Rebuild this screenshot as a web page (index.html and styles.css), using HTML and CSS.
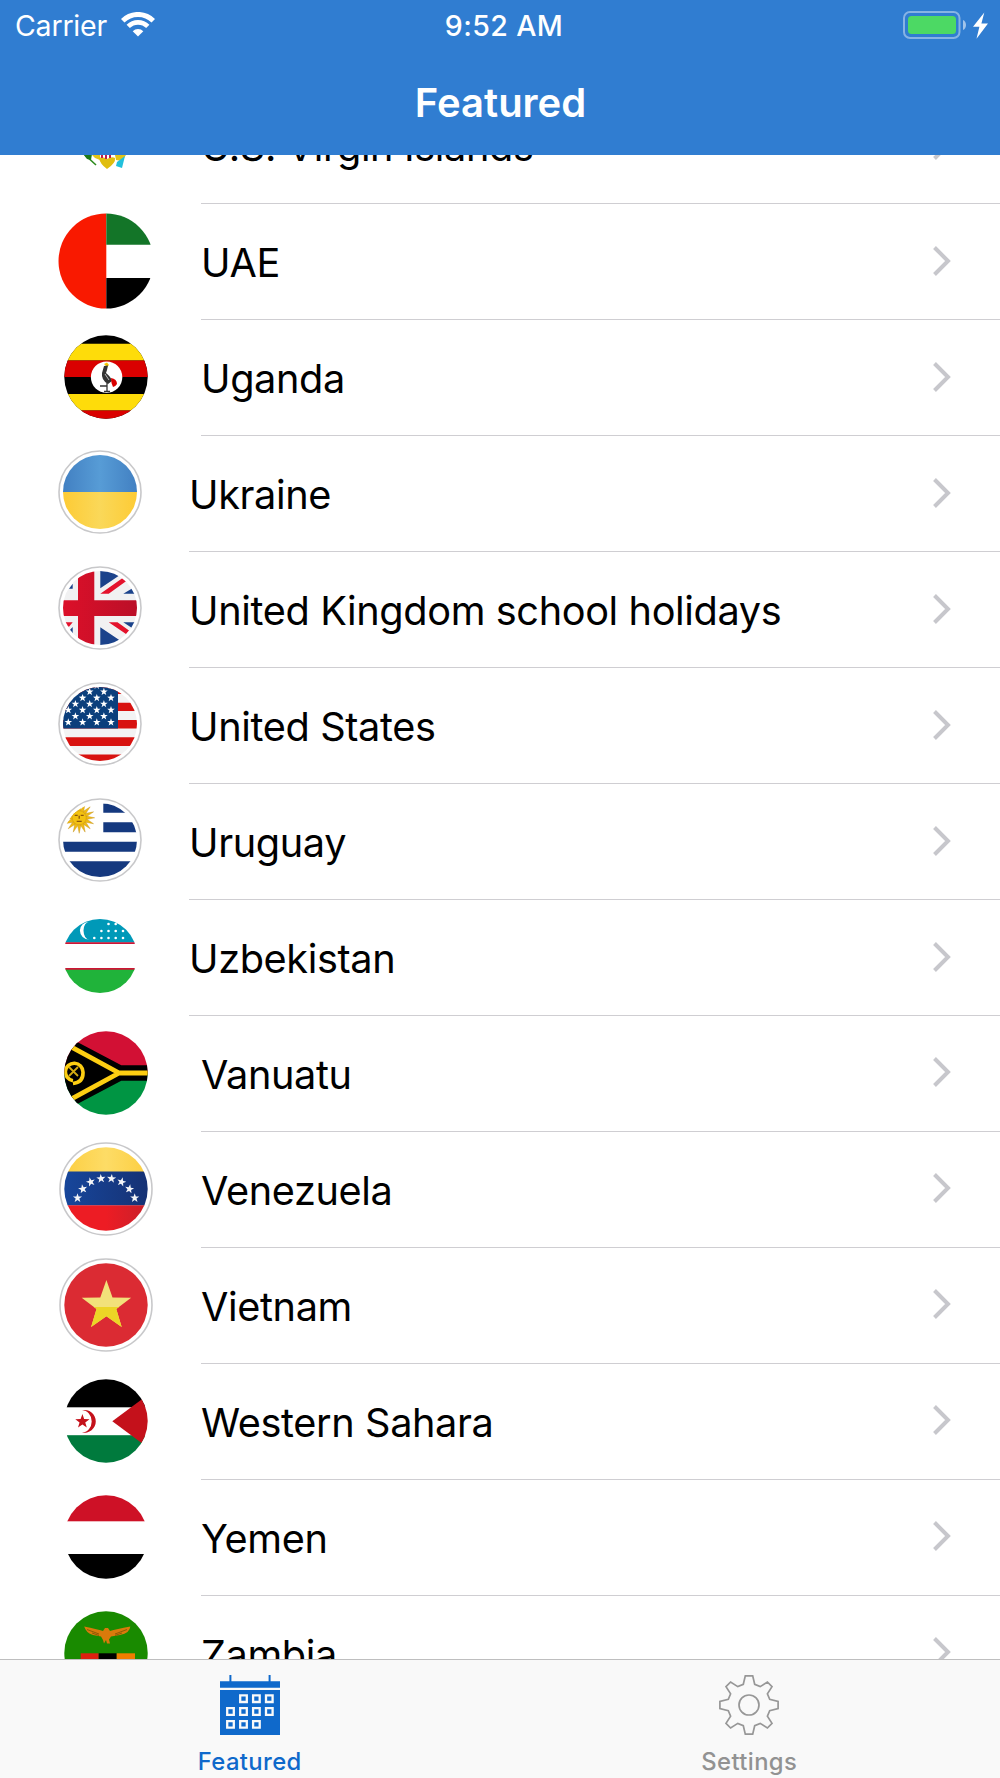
FILE: index.html
```html
<!DOCTYPE html>
<html lang="en">
<head>
    <meta charset="UTF-8">
    <meta name="viewport" content="width=device-width, initial-scale=1.0">
    <title>Featured</title>
    <link rel="stylesheet" href="styles.css">
</head>
<body>
    <!-- Shared shapes -->
    <svg class="defs" width="0" height="0" aria-hidden="true">
        <defs>
            <clipPath id="clip-xl"><circle r="47.5"/></clipPath>
            <clipPath id="clip-lg"><circle r="41.7"/></clipPath>
            <clipPath id="clip-sm"><circle r="37"/></clipPath>
            <linearGradient id="ua-blue"><stop offset="0" stop-color="#4280c2"/><stop offset=".5" stop-color="#579cd6"/><stop offset="1" stop-color="#4280c2"/></linearGradient>
            <linearGradient id="ua-yellow"><stop offset="0" stop-color="#fdcb35"/><stop offset=".5" stop-color="#fad859"/><stop offset="1" stop-color="#fdcb35"/></linearGradient>
            <linearGradient id="ve-yellow"><stop offset="0" stop-color="#fcce41"/><stop offset=".5" stop-color="#fddc66"/><stop offset="1" stop-color="#fcce41"/></linearGradient>
            <linearGradient id="ve-blue"><stop offset="0" stop-color="#17469b"/><stop offset="1" stop-color="#163274"/></linearGradient>
            <linearGradient id="ve-red"><stop offset=".5" stop-color="#ed1c24"/><stop offset="1" stop-color="#c9202a"/></linearGradient>
            <linearGradient id="gb-red"><stop offset="0" stop-color="#dc1029"/><stop offset="1" stop-color="#bb0f28"/></linearGradient>
            <path id="star" d="M0-10 2.35-3.24 9.51-3.09 3.8 1.24 5.88 8.09 0 4-5.88 8.09-3.8 1.24-9.51-3.09-2.35-3.24Z"/>
            <path id="chevron" d="M2.5 2.5 16 16 2.5 29.5"/>
        </defs>
    </svg>

    <header class="header">
        <div class="status-bar">
            <div class="carrier">
                <span>Carrier</span>
                <svg class="wifi" width="34" height="25" viewBox="0 0 34 25">
                    <path d="M1.7 8.8a21.6 21.6 0 0 1 30.6 0" fill="none" stroke="#fff" stroke-width="5"/>
                    <path d="M7.2 14.4a13.9 13.9 0 0 1 19.6 0" fill="none" stroke="#fff" stroke-width="4.6"/>
                    <path d="M17 24.6 11.7 19.2a7.5 7.5 0 0 1 10.6 0Z" fill="#fff"/>
                </svg>
            </div>
            <span class="time">9:52 AM</span>
            <svg class="battery" width="86" height="30" viewBox="0 0 86 30">
                <rect x="1" y="2" width="55.5" height="26" rx="6" fill="none" stroke="#fff" stroke-opacity=".42" stroke-width="2"/>
                <rect x="5" y="6" width="48" height="18" rx="3.5" fill="#4cd964"/>
                <path d="M60 10c4 1.6 4 8.4 0 10Z" fill="#fff" fill-opacity=".55"/>
                <path d="M81.3 2.5 70 16.8h6.4L73.5 28.8 85 13.6h-6.6Z" fill="#fff"/>
            </svg>
        </div>
        <h1 class="title">Featured</h1>
    </header>

    <main class="list-wrap">
        <ul class="list">
            <li class="row">
                <svg class="flag" viewBox="-50 -50 100 100">
                    <path d="M-21 10-10 20" stroke="#2c8a1c" stroke-width="1.6"/>
                    <path d="M-23 9h9l-1 6-4-1Z" fill="#1d7a1a"/>
                    <path d="M-14 10h8v5l-5-2Z" fill="#e3c415"/>
                    <path d="M9 10h11l-4 6-6-1Z" fill="#e3c415"/>
                    <path d="M-7 13Q-3 11 1 14q5-3 8-1 1 5-8 11-7-5-8-11Z" fill="#e0be10"/>
                    <path d="M-4 9v4M0 9v5M4 9v4" stroke="#c21f4a" stroke-width="2"/>
                    <path d="M11 17 19 11l-3 12-6-2Z" fill="#21c0dc"/>
                </svg>
                <div class="cell"><span class="name">U.S. Virgin Islands</span><svg class="chevron"><use href="#chevron"/></svg></div>
            </li>
            <li class="row">
                <svg class="flag" viewBox="-50 -50 100 100">
                    <g clip-path="url(#clip-xl)">
                        <path d="M-50-50H.3V50H-50Z" fill="#f91900"/>
                        <path d="M.3-50H50v33.8H.3Z" fill="#137528"/>
                        <path d="M.3 17H50v33H.3Z" fill="#000"/>
                    </g>
                </svg>
                <div class="cell"><span class="name">UAE</span><svg class="chevron"><use href="#chevron"/></svg></div>
            </li>
            <li class="row">
                <svg class="flag" viewBox="-50 -50 100 100">
                    <g clip-path="url(#clip-lg)">
                        <rect x="-50" y="-50" width="100" height="100" fill="#000"/>
                        <path d="M-50-33.3H50v16.7H-50ZM-50 17H50v16.500H-50Z" fill="#fedc0a"/>
                        <path d="M-50-16.6H50V0H-50ZM-50 33.5H50V50H-50Z" fill="#da0000"/>
                        <circle cx=".6" cy=".2" r="15.7" fill="#fff"/>
                        <path d="M-2-13 1-14.5 3-12 1-10Z" fill="#f2c500"/>
                        <path d="M-2-11 2-11.500 1-7 0-4Q5 0 6 4L2 7Q-5 3-4-4Z" fill="#333"/>
                        <path d="M-1-3 3 3" stroke="#bbb" stroke-width="1"/>
                        <path d="M5 1q6 1 6 6-2 3-4 3-2-4-2-9Z" fill="#d90000"/>
                        <path d="M1 6v8M-2 14.5h6M1 9h-7" fill="none" stroke="#333" stroke-width="1.3"/>
                    </g>
                </svg>
                <div class="cell"><span class="name">Uganda</span><svg class="chevron"><use href="#chevron"/></svg></div>
            </li>
            <li class="row small">
                <svg class="flag" viewBox="-50 -50 100 100">
                    <circle class="ring" r="41"/>
                    <g clip-path="url(#clip-sm)">
                        <rect x="-37" y="-37" width="74" height="37" fill="url(#ua-blue)"/>
                        <rect x="-37" y="0" width="74" height="37" fill="url(#ua-yellow)"/>
                    </g>
                </svg>
                <div class="cell"><span class="name">Ukraine</span><svg class="chevron"><use href="#chevron"/></svg></div>
            </li>
            <li class="row small">
                <svg class="flag" viewBox="-50 -50 100 100">
                    <circle class="ring" r="41"/>
                    <g clip-path="url(#clip-sm)">
                        <rect x="-37" y="-37" width="74" height="74" fill="#f1f1f2"/>
                        <path d="M.3-37 20-36V-33L.3-19.7ZM23.3-14.3 32-19.6 40-14.3ZM.3 19.3 20 32.5V37H.3ZM23.3 14.3H40L32 20ZM-31-19.3-27.3-24.3V-19.3ZM-31 23-27.3 19V26Z" fill="#1b438b"/>
                        <path d="M.3-14.3H8.7L26-26.7 23-30.2ZM8.7 14.3H17.5L29 22.5 26 26ZM-34.5 14.3H-27.3L-31 18.8-34.5 17.5Z" fill="#e4122c"/>
                        <path d="M-22-37h16.3v29.3H37V8H-5.7v29H-22V8h-15V-7.7h15Z" fill="url(#gb-red)"/>
                    </g>
                </svg>
                <div class="cell"><span class="name">United Kingdom school holidays</span><svg class="chevron"><use href="#chevron"/></svg></div>
            </li>
            <li class="row small">
                <svg class="flag" viewBox="-50 -50 100 100">
                    <circle class="ring" r="41"/>
                    <g clip-path="url(#clip-sm)">
                        <rect x="-37" y="-37" width="74" height="74" fill="#f3f3f3"/>
                        <path d="M-37-38.5h74v8.5h-74ZM-37-21.3h74v8.3h-74ZM-37-4h74v8.4h-74ZM-37 13.3h74V22h-74ZM-37 30.5h74V39h-74Z" fill="#d8120f"/>
                        <rect x="-37" y="-37" width="55" height="41.5" fill="#0b3f7c"/>
                        <g id="us-stars" fill="#fff">
                            <use href="#star" transform="translate(-31.7 -1.7) scale(.4)"/>
                            <use href="#star" transform="translate(-17.4 -1.7) scale(.4)"/>
                            <use href="#star" transform="translate(-3.2 -1.7) scale(.4)"/>
                            <use href="#star" transform="translate(11 -1.7) scale(.4)"/>
                            <use href="#star" transform="translate(-24.6 -7.8) scale(.4)"/>
                            <use href="#star" transform="translate(-10.3 -7.8) scale(.4)"/>
                            <use href="#star" transform="translate(3.9 -7.8) scale(.4)"/>
                        </g>
                        <use href="#us-stars" y="-12.2"/>
                        <use href="#us-stars" y="-24.4"/>
                        <use href="#us-stars" y="-36.6"/>
                    </g>
                </svg>
                <div class="cell"><span class="name">United States</span><svg class="chevron"><use href="#chevron"/></svg></div>
            </li>
            <li class="row small">
                <svg class="flag" viewBox="-50 -50 100 100">
                    <circle class="ring" r="41"/>
                    <g clip-path="url(#clip-sm)">
                        <path d="M3.3-36.5H37v9.2H3.3ZM3.3-17.7H37v10H3.3ZM-37 1.700h74v10h-74ZM-37 21.3h74V37h-74Z" fill="#15397f"/>
                        <g transform="translate(-20.8 -22.2)" fill="#f0bb10" stroke="#c4901f" stroke-width=".4">
                            <g id="rays">
                                <path d="M-2-6 0-15.5 2-6V6L0 15.5-2 6Z"/>
                                <path d="M-2-6 0-15.5 2-6V6L0 15.5-2 6Z" transform="rotate(45)"/>
                                <path d="M-2-6 0-15.5 2-6V6L0 15.5-2 6Z" transform="rotate(90)"/>
                                <path d="M-2-6 0-15.5 2-6V6L0 15.5-2 6Z" transform="rotate(135)"/>
                            </g>
                            <use href="#rays" transform="rotate(22.5)"/>
                            <circle r="7" fill="#f3c211"/>
                            <path d="M-4.5-2.5h3M1.5-2.5h3M0-2v3M-2.5 3.5h5" stroke="#8a5510" stroke-width="1.3"/>
                        </g>
                    </g>
                </svg>
                <div class="cell"><span class="name">Uruguay</span><svg class="chevron"><use href="#chevron"/></svg></div>
            </li>
            <li class="row small">
                <svg class="flag" viewBox="-50 -50 100 100">
                    <g clip-path="url(#clip-sm)">
                        <rect x="-37" y="-37" width="74" height="23.5" fill="#0099b8"/>
                        <rect x="-37" y="13" width="74" height="24" fill="#20b33a"/>
                        <path d="M-37-13.7h74v1.8h-74ZM-37 12h74v1.8h-74Z" fill="#ce1435"/>
                        <path d="M-10.7-34.3a9.4 8.9 0 0 0 0 17.8 5.8 8.9 0 0 1 0-17.8Z" fill="#fff"/>
                        <g fill="#fff">
                            <circle cx="-5.7" cy="-18" r="1.3"/><circle cx="1.4" cy="-18" r="1.3"/><circle cx="8.5" cy="-18" r="1.3"/><circle cx="15.7" cy="-18" r="1.3"/><circle cx="23" cy="-18" r="1.3"/>
                            <circle cx="1.4" cy="-25" r="1.3"/><circle cx="8.5" cy="-25" r="1.3"/><circle cx="15.7" cy="-25" r="1.3"/><circle cx="23" cy="-25" r="1.3"/>
                            <circle cx="8.5" cy="-32" r="1.3"/><circle cx="15.7" cy="-32" r="1.3"/>
                        </g>
                    </g>
                </svg>
                <div class="cell"><span class="name">Uzbekistan</span><svg class="chevron"><use href="#chevron"/></svg></div>
            </li>
            <li class="row">
                <svg class="flag" viewBox="-50 -50 100 100">
                    <g clip-path="url(#clip-lg)">
                        <rect x="-50" y="-50" width="100" height="50" fill="#d21034"/>
                        <rect x="-50" y="0" width="100" height="50" fill="#009543"/>
                        <path d="M-46-40 15.3-7.7H50V7.7H15.3L-46 40Z" fill="#000"/>
                        <path d="M-46-32.3 13 0-46 32.3M12 0H50" fill="none" stroke="#fdce12" stroke-width="4.8"/>
                        <path d="M-33 7.700A8.800 8.800 0 1 1-23-1Q-22.500 9.500-33 10.500" fill="none" stroke="#fdce12" stroke-width="3.6"/>
                        <path d="M-37-6-28 3M-28-6-37 3" stroke="#d3ab12" stroke-width="1.8"/>
                    </g>
                </svg>
                <div class="cell"><span class="name">Vanuatu</span><svg class="chevron"><use href="#chevron"/></svg></div>
            </li>
            <li class="row">
                <svg class="flag" viewBox="-50 -50 100 100">
                    <circle class="ring" r="46"/>
                    <g clip-path="url(#clip-lg)">
                        <rect x="-42" y="-42" width="84" height="25" fill="url(#ve-yellow)"/>
                        <rect x="-42" y="-17.5" width="84" height="34" fill="url(#ve-blue)"/>
                        <rect x="-42" y="16.3" width="84" height="26" fill="url(#ve-red)"/>
                        <g fill="#f4f5f7">
                            <use href="#star" transform="translate(-28.5 9) scale(.48)"/>
                            <use href="#star" transform="translate(-23.2 0) rotate(-10) scale(.48)"/>
                            <use href="#star" transform="translate(-15.3 -7) rotate(-15) scale(.48)"/>
                            <use href="#star" transform="translate(-5 -10.3) rotate(-5) scale(.48)"/>
                            <use href="#star" transform="translate(5.5 -10.3) rotate(5) scale(.48)"/>
                            <use href="#star" transform="translate(15.5 -7) rotate(15) scale(.48)"/>
                            <use href="#star" transform="translate(23.4 0) rotate(10) scale(.48)"/>
                            <use href="#star" transform="translate(28.7 9) scale(.48)"/>
                        </g>
                    </g>
                </svg>
                <div class="cell"><span class="name">Venezuela</span><svg class="chevron"><use href="#chevron"/></svg></div>
            </li>
            <li class="row">
                <svg class="flag" viewBox="-50 -50 100 100">
                    <circle class="ring" r="46"/>
                    <circle r="41.7" fill="#db2b33"/>
                    <use href="#star" transform="translate(.4 .9) scale(2.6)" fill="#f2e17a"/>
                    <clipPath id="vn-lower"><rect x="-40" y="2" width="80" height="30"/></clipPath>
                    <g clip-path="url(#vn-lower)"><use href="#star" transform="translate(.4 .9) scale(2.6)" fill="#ecd526"/></g>
                </svg>
                <div class="cell"><span class="name">Vietnam</span><svg class="chevron"><use href="#chevron"/></svg></div>
            </li>
            <li class="row">
                <svg class="flag" viewBox="-50 -50 100 100">
                    <g clip-path="url(#clip-lg)">
                        <rect x="-50" y="-50" width="100" height="36.3" fill="#000"/>
                        <rect x="-50" y="14.2" width="100" height="36" fill="#007a3d"/>
                        <path d="M6.3.3 50-32.2V32.8Z" fill="#c4111b"/>
                        <path d="M-24-10.7A11.4 11.4 0 1 1-24 11.6 9.7 11.15 0 0 0-24-10.7Z" fill="#c4111b"/>
                        <use href="#star" transform="translate(-23.6 .5) scale(.75)" fill="#c4111b"/>
                    </g>
                </svg>
                <div class="cell"><span class="name">Western Sahara</span><svg class="chevron"><use href="#chevron"/></svg></div>
            </li>
            <li class="row">
                <svg class="flag" viewBox="-50 -50 100 100">
                    <g clip-path="url(#clip-lg)">
                        <rect x="-50" y="-50" width="100" height="34.3" fill="#ce1126"/>
                        <rect x="-50" y="17" width="100" height="33" fill="#000"/>
                    </g>
                </svg>
                <div class="cell"><span class="name">Yemen</span><svg class="chevron"><use href="#chevron"/></svg></div>
            </li>
            <li class="row">
                <svg class="flag" viewBox="-50 -50 100 100">
                    <g clip-path="url(#clip-lg)">
                        <rect x="-50" y="-50" width="100" height="100" fill="#198a00"/>
                        <rect x="-25.3" y=".3" width="18" height="50" fill="#de2010"/>
                        <rect x="-7.3" y=".3" width="18" height="50" fill="#000"/>
                        <rect x="10.7" y=".3" width="18.3" height="50" fill="#ef7d00"/>
                        <path d="M-21.8-26.5Q-9-24-3-22L-1-25H2L4-22Q10-24 24.3-26.5 24-20 14-18L5-16.5 3-13.5 4-9.5H1L0-13-2-9.5-3-13-5-16.5-13-18Q-20-20-21.8-26.5Z" fill="#d97a0b"/>
                        <path d="M-19-23.5-7-19M21-23.5 9-19M-14-20-7-17.5M16-20 9-17.5" stroke="#8f5a06" stroke-width="1"/>
                    </g>
                </svg>
                <div class="cell"><span class="name">Zambia</span><svg class="chevron"><use href="#chevron"/></svg></div>
            </li>
        </ul>
    </main>

    <nav class="tab-bar">
        <a class="tab active">
            <svg width="60" height="60" viewBox="0 0 60 60">
                <path d="M9.4 0h2v7h-2ZM48.6 0h2v7h-2ZM0 6.3h60v6.5H0ZM0 15h60v45H0Z" fill="#0f69cb"/>
                <g fill="none" stroke="#f9f9f9" stroke-width="2.3">
                    <path d="M20.2 20.4h6.6v6.6h-6.6ZM33.1 20.4h6.6v6.6h-6.6ZM46 20.4h6.6v6.6H46Z"/>
                    <path d="M7.2 33.2h6.6v6.6H7.2ZM20.2 33.2h6.6v6.6h-6.6ZM33.1 33.2h6.6v6.6h-6.6ZM46 33.2h6.6v6.6H46Z"/>
                    <path d="M7.2 46.1h6.6v6.6H7.2ZM20.2 46.1h6.6v6.6h-6.6ZM33.1 46.1h6.6v6.6h-6.6Z"/>
                </g>
            </svg>
            <span>Featured</span>
        </a>
        <a class="tab">
            <svg width="60" height="60" viewBox="-30 -30 60 60">
                <g fill="none" stroke="#979797" stroke-width="1.7">
                    <path d="M-3.7-29.1H3.7L5.7-20.7 11.2-18.4 18.4-23 23-18.4 18.4-11.2 20.7-5.7 29.1-3.7V3.7L20.7 5.7 18.4 11.2 23 18.4 18.4 23 11.2 18.4 5.7 20.7 3.7 29.1H-3.7L-5.7 20.7-11.2 18.4-18.4 23-23 18.4-18.4 11.2-20.7 5.7-29.1 3.7V-3.7L-20.7-5.7-18.4-11.2-23-18.4-18.4-23-11.2-18.4-5.7-20.7Z"/>
                    <circle r="10"/>
                </g>
            </svg>
            <span>Settings</span>
        </a>
    </nav>
</body>
</html>
```

FILE: styles.css
```css
/* Base styles */
:root {
    --header-color: #307dd1;
    --tint-color: #0f69cb;
    --line-color: #cfced2;
    --row-height: 115.97px;
}

* {
    box-sizing: border-box;
}

body {
    margin: 0;
    height: 1778px;
    display: flex;
    flex-direction: column;
    overflow: hidden;
    background-color: #fff;
    color: #000;
    font-family: Inter, "Liberation Sans", sans-serif;
}

.defs {
    position: absolute;
}

/* Header */
.header {
    flex: none;
    height: 155px;
    background-color: var(--header-color);
    color: #fff;
}

.status-bar {
    display: grid;
    grid-template-columns: 1fr auto 1fr;
    align-items: center;
    height: 48px;
    padding: 2px 11px 0 15px;
    font-size: 28.5px;
}

.carrier {
    display: flex;
    align-items: center;
    gap: 14px;
    letter-spacing: -0.2px;
}

.wifi {
    margin-bottom: 2px;
}

.time {
    font-weight: 500;
    letter-spacing: 0.4px;
    margin-left: 4px;
}

.battery {
    justify-self: end;
    margin-bottom: 1px;
}

.title {
    margin: 0;
    height: 107px;
    line-height: 110px;
    text-align: center;
    font-size: 40px;
    font-weight: 600;
    text-indent: 1px;
}

/* Country list */
.list-wrap {
    flex: 1;
    min-height: 0;
    overflow: hidden;
}

.list {
    list-style: none;
    margin: -67px 0 0;
    padding: 0;
}

.row {
    display: flex;
    align-items: center;
    height: var(--row-height);
    padding-left: 56px;
}

.flag {
    flex: none;
    width: 100px;
    height: 100px;
    margin: 0 45px 2px 0;
}

.ring {
    fill: #fff;
    stroke: #c8c8ca;
    stroke-width: 1.6;
}

.row.small {
    padding-left: 50px;
}

.row.small .flag {
    margin: 0 39px 3.5px 0;
}

.cell {
    flex: 1;
    height: 100%;
    display: flex;
    align-items: center;
    justify-content: space-between;
    padding-right: 47px;
    border-bottom: 1px solid var(--line-color);
}

.name {
    padding-top: 3px;
    font-size: 39.7px;
    letter-spacing: -0.38px;
    white-space: nowrap;
}

.chevron {
    width: 21px;
    height: 32px;
    margin-bottom: 1.5px;
    fill: none;
    stroke: #c7c7cc;
    stroke-width: 4;
}

/* Tab bar */
.tab-bar {
    flex: none;
    display: flex;
    height: 119px;
    padding-right: 1px;
    border-top: 1px solid #bebebf;
    background-color: #f9f9f9;
}

.tab {
    flex: 1;
    display: flex;
    flex-direction: column;
    align-items: center;
    padding-top: 15px;
    color: #929292;
    font-size: 23.8px;
    font-weight: 500;
    letter-spacing: 0.4px;
}

.tab span {
    margin-top: 12px;
}

.tab.active {
    color: var(--tint-color);
}
```
